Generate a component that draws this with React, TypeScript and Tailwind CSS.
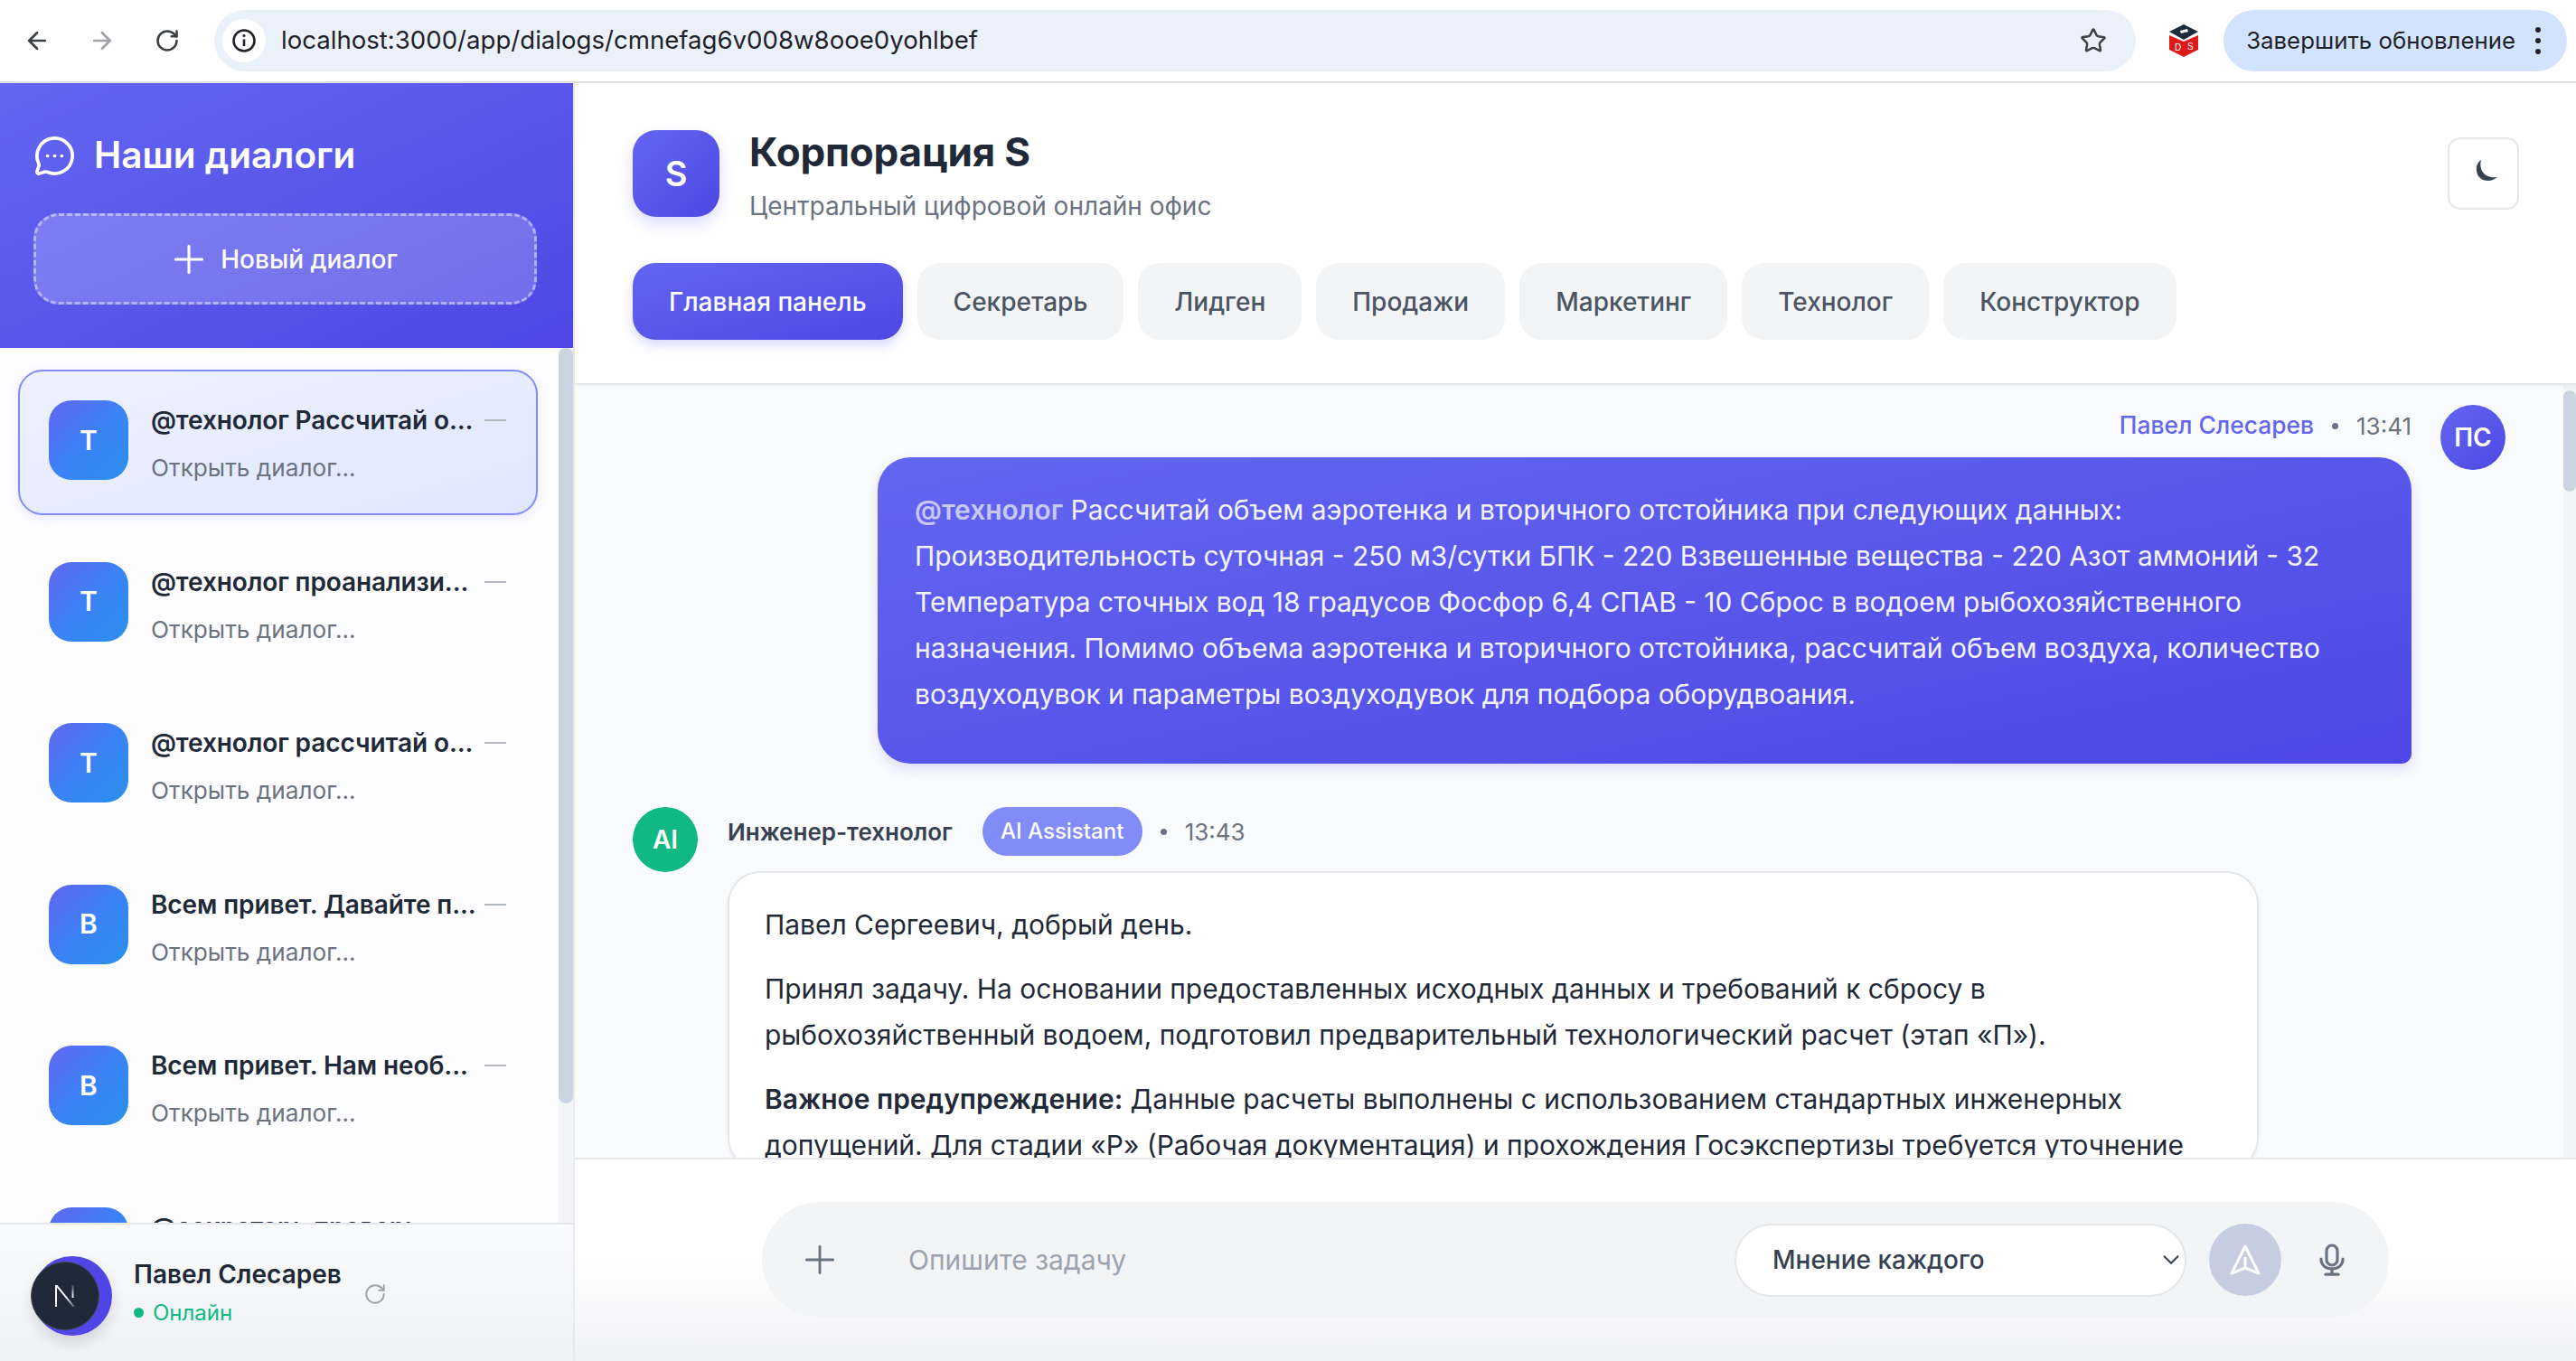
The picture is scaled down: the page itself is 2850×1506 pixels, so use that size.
import React from "react";
import {
  ArrowLeft,
  ArrowRight,
  ChevronDown,
  MessageCircleMore,
  Plus,
  RotateCw,
  Star,
} from "lucide-react";

const dialogs = [
  { letter: "Т", title: "@технолог Рассчитай о...", active: true },
  { letter: "Т", title: "@технолог проанализи..." },
  { letter: "Т", title: "@технолог рассчитай о..." },
  { letter: "В", title: "Всем привет. Давайте п..." },
  { letter: "В", title: "Всем привет. Нам необ..." },
  { letter: "С", title: "@секретарь проверь..." },
];

const tabs = ["Секретарь", "Лидген", "Продажи", "Маркетинг", "Технолог", "Конструктор"];

const ChromeBar = () => (
  <div className="h-[92px] shrink-0 flex items-center bg-white border-b-2 border-[#e3e3e3] pl-[26px] pr-[10px]">
    <ArrowLeft className="w-[30px] h-[30px] text-[#3c4043]" strokeWidth={2.2} />
    <ArrowRight className="w-[30px] h-[30px] text-[#a0a3a8] ml-[42px]" strokeWidth={2.2} />
    <RotateCw className="w-[28px] h-[28px] text-[#3c4043] ml-[43px]" strokeWidth={2.2} />
    <div className="ml-[38px] w-[2127px] h-[68px] rounded-full bg-[#ebf1fb] flex items-center pl-[9px] pr-[32px]">
      <div className="w-[48px] h-[48px] rounded-full bg-white flex items-center justify-center">
        <svg viewBox="0 0 28 28" className="w-[28px] h-[28px]" fill="none" stroke="#1f2328" strokeWidth="2.6">
          <circle cx="14" cy="14" r="11.5" />
          <path d="M14 12.5V20" />
          <circle cx="14" cy="8.5" r="1.6" fill="#1f2328" stroke="none" />
        </svg>
      </div>
      <span className="ml-[17px] text-[27.6px] text-[#1f2328]">
        localhost:3000/app/dialogs/cmnefag6v008w8ooe0yohlbef
      </span>
      <Star className="ml-auto w-[30px] h-[30px] text-[#3c4043]" strokeWidth={2} />
    </div>
    <svg viewBox="0 0 32 36" className="ml-[37px] w-[32px] h-[36px]">
      <path d="M0 12 16 19 32 12V28L16 36 0 28Z" fill="#dc1a1a" />
      <path d="M16 0 32 8 16 17 0 8Z" fill="#1f2a3a" />
      <path d="M12 7 20 5 21 8 13 10Z" fill="#fff" />
      <text x="6" y="29" fontSize="10" fill="#fff" fontFamily="Liberation Sans">D</text>
      <text x="20" y="28" fontSize="10" fill="#fff" fontFamily="Liberation Sans">S</text>
    </svg>
    <div className="ml-[28px] w-[380px] h-[68px] rounded-full bg-[#d3e3fd] flex items-center pl-[25px]">
      <span className="text-[25.8px] text-[#1f2328] whitespace-nowrap">Завершить обновление</span>
      <div className="ml-[22px] flex flex-col gap-[6px]">
        <span className="w-[6px] h-[6px] rounded-full bg-[#1f2328]" />
        <span className="w-[6px] h-[6px] rounded-full bg-[#1f2328]" />
        <span className="w-[6px] h-[6px] rounded-full bg-[#1f2328]" />
      </div>
    </div>
  </div>
);

const DialogItem = ({ letter, title, active }: { letter: string; title: string; active?: boolean }) => (
  <div
    className={`h-[161px] shrink-0 rounded-[27px] border-2 flex pl-[32px] pr-[33px] pt-[32px] ${
      active
        ? "border-[#818cf8] bg-gradient-to-br from-[#eef2ff] to-[#e0e7ff] shadow-[0_4px_12px_rgba(99,102,241,0.12)]"
        : "border-transparent"
    }`}>
    <div className="w-[88px] h-[88px] shrink-0 rounded-[25px] [background-image:linear-gradient(135deg,#6366f1_0%,#3b82f6_50%,#2a90ea_100%)] flex items-center justify-center text-white text-[30px] font-semibold">
      {letter}
    </div>
    <div className="ml-[25px] min-w-0 flex-1">
      <div className="flex items-center h-[44px]">
        <span className="text-[28px] font-semibold text-[#1f2937] whitespace-nowrap tracking-[-0.1px]">{title}</span>
        <span className="ml-auto w-[24px] h-[2px] bg-[#b4b8c1] shrink-0" />
      </div>
      <div className="mt-[9px] text-[26.2px] leading-[44px] text-[#6b7280]">Открыть диалог...</div>
    </div>
  </div>
);

const Sidebar = () => (
  <aside className="w-[636px] shrink-0 flex flex-col bg-[#fdfdff] border-r-2 border-[#e8eaef] min-h-0">
    <div className="h-[293px] shrink-0 bg-gradient-to-br from-[#6366f1] to-[#4f46e5] px-[37px] pt-[56px]">
      <div className="flex items-center h-[48px]">
        <MessageCircleMore className="w-[47px] h-[47px] text-white" strokeWidth={1.9} />
        <span className="ml-[20px] text-[40.5px] font-semibold text-white leading-none">Наши диалоги</span>
      </div>
      <div className="mt-[40px] w-[557px] h-[101px] rounded-[28px] border-[3px] border-dashed border-white/45 bg-white/20 flex items-center justify-center">
        <Plus className="w-[50px] h-[50px] -mx-[7px] text-white" strokeWidth={1.5} />
        <span className="ml-[17px] text-[28px] font-medium text-white">Новый диалог</span>
      </div>
    </div>
    <div className="flex-1 min-h-0 flex overflow-hidden">
      <div className="flex-1 min-w-0 pl-[20px] pr-[23px] pt-[24px] flex flex-col gap-[17.5px] overflow-hidden">
        {dialogs.map((d, i) => (
          <DialogItem key={i} {...d} />
        ))}
      </div>
      <div className="w-[16px] shrink-0 bg-[#f3f4f6]">
        <div className="w-[16px] h-[836px] rounded-full bg-[#cbd5e1]" />
      </div>
    </div>
    <div className="h-[153px] shrink-0 border-t-2 border-[#e5e7eb] bg-gradient-to-b from-[#fafbfc] to-[#f0f1f5] flex items-center pl-[34px]">
      <div className="relative w-[90px] h-[88px] shrink-0 mt-[6px]">
        <div className="absolute right-0 top-0 w-[88px] h-[88px] rounded-full bg-[#4f46e5] shadow-[0_8px_16px_rgba(0,0,0,0.12)]" />
        <div className="absolute left-0 top-[6px] w-[76px] h-[76px] rounded-full bg-[#1f2937] border border-[#3f4856] flex items-center justify-center">
          <svg viewBox="0 0 26 26" className="w-[26px] h-[26px]" fill="none">
            <defs>
              <linearGradient id="nextFade" x1="0" y1="0" x2="0" y2="1">
                <stop offset="0" stopColor="#fff" stopOpacity="0.15" />
                <stop offset="1" stopColor="#fff" />
              </linearGradient>
              <linearGradient id="nextDiag" x1="0" y1="0" x2="1" y2="1">
                <stop offset="0.55" stopColor="#fff" />
                <stop offset="1" stopColor="#fff" stopOpacity="0.2" />
              </linearGradient>
            </defs>
            <path d="M2 1H4V25H2Z" fill="#fff" />
            <path d="M2 1H4.4L24 25H21.4Z" fill="url(#nextDiag)" />
            <path d="M20.5 1H22.5V15H20.5Z" fill="url(#nextFade)" />
          </svg>
        </div>
      </div>
      <div className="ml-[24px] -mt-[1px]">
        <div className="text-[28px] font-semibold text-[#1f2937] leading-[36px] whitespace-nowrap">Павел Слесарев</div>
        <div className="flex items-center mt-[9px] leading-[32px]">
          <span className="w-[11px] h-[11px] rounded-full bg-[#10b981]" />
          <span className="ml-[10px] text-[24px] text-[#10b981]">Онлайн</span>
        </div>
      </div>
      <RotateCw className="ml-[24px] w-[26px] h-[26px] text-[#9ca3af] mt-[2px]" strokeWidth={1.8} />
    </div>
  </aside>
);

const Header = () => (
  <header className="h-[334px] shrink-0 bg-white border-b-2 border-[#e5e7eb] shadow-[0_2px_6px_rgba(0,0,0,0.04)] pl-[64px] pr-[63px] pt-[52px] relative z-10">
    <div className="flex h-[96px]">
      <div className="w-[96px] h-[96px] rounded-[26px] bg-gradient-to-br from-[#6366f1] to-[#4f46e5] shadow-[0_8px_16px_rgba(99,102,241,0.22)] flex items-center justify-center text-white text-[38px] font-semibold">
        S
      </div>
      <div className="ml-[33px]">
        <div className="text-[44px] font-bold text-[#1f2937] leading-[50px] -mt-[1px] tracking-[-0.2px]">Корпорация S</div>
        <div className="mt-[17px] text-[28px] text-[#6b7280] leading-[36px]">Центральный цифровой онлайн офис</div>
      </div>
      <div className="ml-auto w-[79px] h-[80px] mt-[8px] rounded-[14px] border-2 border-[#e5e7eb] bg-white flex items-center justify-center">
        <svg viewBox="0 0 24 24" className="w-[24px] h-[24px] -mt-[6px] ml-[6px]">
          <path d="M6 0C1 3-.5 10 2 16c3 7 14 10 22 3-7 1-14-1-17-7C5 8 5 4 6 0Z" fill="#374151" />
        </svg>
      </div>
    </div>
    <div className="mt-[51px] flex gap-[16px]">
      <div className="h-[85px] px-[40px] rounded-[25px] bg-gradient-to-br from-[#6366f1] to-[#4f46e5] shadow-[0_6px_12px_rgba(99,102,241,0.25)] flex items-center text-[28px] font-medium text-white">
        Главная панель
      </div>
      {tabs.map((t) => (
        <div key={t} className="h-[85px] px-[40px] rounded-[25px] bg-[#f3f4f6] flex items-center text-[28px] font-medium text-[#4b5563]">
          {t}
        </div>
      ))}
    </div>
  </header>
);

const Messages = () => (
  <div className="flex-1 min-h-0 flex bg-[#fafbfc] overflow-hidden">
    <div className="flex-1 min-w-0 pl-[64px] pr-[64px] pt-[22px] overflow-hidden">
      <div className="flex justify-end">
        <div className="w-[1697px]">
          <div className="flex items-center justify-end h-[46px]">
            <span className="text-[26.4px] font-medium text-[#6366f1]">Павел Слесарев</span>
            <span className="mx-[20px] w-[7px] h-[7px] rounded-full bg-[#6b7280]" />
            <span className="text-[26px] text-[#6b7280]">13:41</span>
          </div>
          <div className="mt-[12px] h-[339px] rounded-[36px] rounded-br-[11px] bg-gradient-to-br from-[#6366f1] to-[#4f46e5] shadow-[0_6px_14px_rgba(99,102,241,0.2)] pl-[41px] pr-[41px] pt-[33px] text-[29.95px] leading-[51px] text-[#f2f3ff]">
            <span className="font-semibold text-[#c7c9f5]">@технолог</span> Рассчитай объем аэротенка и вторичного отстойника при следующих данных: Производительность суточная - 250 м3/сутки БПК - 220 Взвешенные вещества - 220 Азот аммоний - 32 Температура сточных вод 18 градусов Фосфор 6,4 СПАВ - 10 Сброс в водоем рыбохозяйственного назначения. Помимо объема аэротенка и вторичного отстойника, рассчитай объем воздуха, количество воздуходувок и параметры воздуходувок для подбора оборудвоания.
          </div>
        </div>
        <div className="ml-[32px] w-[72px] h-[72px] shrink-0 rounded-full bg-gradient-to-br from-[#6366f1] to-[#4f46e5] flex items-center justify-center text-white text-[28px] font-semibold">
          ПС
        </div>
      </div>
      <div className="flex mt-[48px]">
        <div className="w-[72px] h-[72px] shrink-0 rounded-full bg-[#10b981] flex items-center justify-center text-white text-[28px] font-semibold">
          AI
        </div>
        <div className="ml-[33px] w-[1694px] shrink-0">
          <div className="flex items-center h-[54px]">
            <span className="text-[26px] font-semibold text-[#374151]">Инженер-технолог</span>
            <span className="ml-[33px] h-[54px] w-[177px] rounded-full bg-[#818cf8] flex items-center justify-center text-[24px] font-medium text-white whitespace-nowrap">
              AI Assistant
            </span>
            <span className="mx-[20px] w-[7px] h-[7px] rounded-full bg-[#6b7280]" />
            <span className="text-[26px] text-[#6b7280]">13:43</span>
          </div>
          <div className="mt-[17px] rounded-[36px] border-2 border-[#e5e7eb] bg-white shadow-[0_2px_6px_rgba(0,0,0,0.05)] pl-[39px] pr-[39px] pt-[32px] text-[29.95px] leading-[51px] text-[#1f2937]">
            <p>Павел Сергеевич, добрый день.</p>
            <p className="mt-[20px]">
              Принял задачу. На основании предоставленных исходных данных и требований к сбросу в рыбохозяйственный водоем, подготовил предварительный технологический расчет (этап «П»).
            </p>
            <p className="mt-[20px]">
              <strong className="font-semibold">Важное предупреждение:</strong> Данные расчеты выполнены с использованием стандартных инженерных допущений. Для стадии «Р» (Рабочая документация) и прохождения Госэкспертизы требуется уточнение
            </p>
          </div>
        </div>
      </div>
    </div>
    <div className="w-[14px] shrink-0 bg-[#f3f4f6] pt-[6px]">
      <div className="w-[14px] h-[112px] rounded-full bg-[#cbd5e1]" />
    </div>
  </div>
);

const Composer = () => (
  <div className="h-[225px] shrink-0 bg-gradient-to-b from-white via-white to-[#f0f1f4] border-t-2 border-[#e5e7eb] pt-[47px] pl-[207px] relative z-10">
    <div className="w-[1800px] h-[128px] rounded-[64px] bg-[#f3f4f6] flex items-center pl-[46px] pr-[49px]">
      <Plus className="w-[50px] h-[50px] -mx-[7px] text-[#6b7280]" strokeWidth={1.4} />
      <span className="ml-[80px] text-[30px] text-[#9ca3af]">Опишите задачу</span>
      <div className="ml-auto w-[500px] h-[81px] rounded-full border-2 border-[#e5e7eb] bg-white flex items-center pl-[40px] text-[28px] font-medium text-[#374151]">
        Мнение каждого
        <ChevronDown className="ml-auto w-[30px] h-[30px] text-[#374151]" strokeWidth={1.6} />
      </div>
      <div className="ml-[25px] w-[80px] h-[80px] rounded-full bg-[#c7cde0] flex items-center justify-center">
        <svg viewBox="0 0 36 36" className="w-[36px] h-[36px]" fill="none" stroke="white" strokeWidth="3" strokeLinejoin="round">
          <path d="M18 3 33 33 18 27 3 33Z" />
          <path d="M18 15V27" />
        </svg>
      </div>
      <svg viewBox="0 0 28 36" className="ml-[42px] w-[28px] h-[36px]" fill="none" stroke="#6b7280" strokeWidth="3.2" strokeLinecap="round">
        <rect x="8" y="2" width="12" height="22" rx="6" />
        <path d="M2 17c0 7 5 11 12 11s12-4 12-11" />
        <path d="M14 28v6" />
        <path d="M7 34.2h14" />
      </svg>
    </div>
  </div>
);

export default function App() {
  return (
    <div className="w-[2850px] h-[1506px] overflow-hidden flex flex-col font-['Inter',sans-serif] bg-white">
      <ChromeBar />
      <div className="flex-1 min-h-0 flex">
        <Sidebar />
        <main className="flex-1 min-w-0 flex flex-col">
          <Header />
          <Messages />
          <Composer />
        </main>
      </div>
    </div>
  );
}
